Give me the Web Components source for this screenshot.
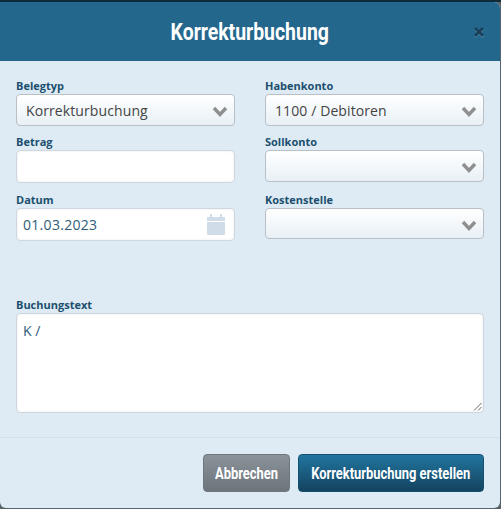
<!DOCTYPE html>
<html>
<head>
<meta charset="utf-8">
<style>
  html, body { margin: 0; height: 100%; overflow: hidden; }
  body { font-family: "Open Sans", sans-serif; background: linear-gradient(#0f2a38 0 2px, #59636a 2px); }
</style>
</head>
<body>
<template id="dialog-tpl">
  <style>
    :host { display: flex; flex-direction: column; box-sizing: border-box; width: 500px; height: 506px; margin-top: 2px; background: #deebf5; border-radius: 0 6px 6px 6px; overflow: hidden; }
    header { position: relative; height: 59px; flex: none; display: flex; align-items: center; justify-content: center; background: #24678c; color: #fff; font: 700 24px "Roboto", sans-serif; }
    header span { display: inline-block; transform: scaleX(.81); white-space: nowrap; }
    svg { position: absolute; right: 16px; top: 25px; }
    main { flex: 1; padding: 18px 16px 0; }
    footer { flex: none; height: 71px; box-sizing: border-box; border-top: 1px solid #d4e0ea; display: flex; justify-content: flex-end; align-items: flex-start; gap: 8px; padding: 16px 16px 0; }
  </style>
  <header><span><slot name="title"></slot></span>
    <svg width="10" height="11" viewBox="0 0 10 11">
      <path d="M1 2 9 10M9 2 1 10" stroke="#9cc4da" stroke-width="2.4" opacity=".5"/>
      <path d="M1 1 9 9M9 1 1 9" stroke="#173f56" stroke-width="2.6"/>
    </svg>
  </header>
  <main><slot></slot></main>
  <footer><slot name="actions"></slot></footer>
</template>

<template id="field-tpl">
  <style>
    :host { display: block; font: 400 14px "Open Sans", sans-serif; }
    label { display: block; font-weight: 700; font-size: 11px; line-height: 14px; color: #1c4f6d; }
    .box { box-sizing: border-box; margin-top: 1px; position: relative; display: flex; align-items: center; border-radius: 4px; }
    .select { height: var(--box-height, 32px); padding-left: 9px; letter-spacing: .1px; background: linear-gradient(#fff, #e8f0f6); border: 1px solid #b9bfc5; color: #444; }
    .input { height: 33px; margin-bottom: 1px; padding-left: 6px; letter-spacing: .3px; background: #fff; border: 1px solid #cfd6dd; color: #2f5c78; box-shadow: inset 0 0 3px rgba(0,0,0,.08); }
    svg { position: absolute; }
    .select svg { right: 5px; top: 50%; transform: translateY(calc(-50% + 1.5px)); }
    .input svg { right: 8px; top: 5px; }
  </style>
  <label></label>
  <div class="box"><slot></slot><span class="icon"></span></div>
</template>

<template id="text-tpl">
  <style>
    :host { display: block; font: 400 14px "Open Sans", sans-serif; }
    label { display: block; font-weight: 700; font-size: 11px; line-height: 14px; color: #1c4f6d; }
    .area { box-sizing: border-box; position: relative; margin-top: 1px; height: 100px; background: #fff; border: 1px solid #cfd6dd; border-radius: 4px; padding: 7px 6px; line-height: 19px; color: #2f5c78; box-shadow: inset 0 0 3px rgba(0,0,0,.08); }
    svg { position: absolute; right: 1px; bottom: 1px; }
  </style>
  <label></label>
  <div class="area"><slot></slot>
    <svg width="9" height="9" viewBox="0 0 9 9"><path d="M1 8.500 8.500 1M5 8.500 8.500 5" stroke="#666" stroke-width="1"/></svg>
  </div>
</template>

<template id="button-tpl">
  <style>
    :host { display: block; box-sizing: border-box; height: 38px; border-radius: 4px; color: #fff; font: 700 17px "Roboto", sans-serif; }
    :host([kind="grey"]) { background: linear-gradient(#8a929a, #6d747b); border: 1px solid #6f767c; width: 87px; }
    :host([kind="blue"]) { background: linear-gradient(#21759f, #14435f); border: 1px solid #14506f; width: 186px; }
    div { height: 100%; display: flex; align-items: center; justify-content: center; }
    span { display: inline-block; flex: none; white-space: nowrap; transform: scaleX(.76); }
  </style>
  <div><span><slot></slot></span></div>
</template>

<booking-dialog>
  <span slot="title">Korrekturbuchung</span>
  <booking-form>
    <form-field label="Belegtyp" type="select">Korrekturbuchung</form-field>
    <form-field label="Habenkonto" type="select">1100 / Debitoren</form-field>
    <form-field label="Betrag" type="input"></form-field>
    <form-field label="Sollkonto" type="select"></form-field>
    <form-field label="Datum" type="date">01.03.2023</form-field>
    <form-field label="Kostenstelle" type="select" style="--box-height: 31px"></form-field>
    <form-text label="Buchungstext">K /</form-text>
  </booking-form>
  <dialog-button slot="actions" kind="grey">Abbrechen</dialog-button>
  <dialog-button slot="actions" kind="blue">Korrekturbuchung erstellen</dialog-button>
</booking-dialog>

<script>
  const chevron = `<svg width="18" height="11" viewBox="0 0 18 11"><path d="M3 2 9 8.500 15 2" fill="none" stroke="#8f8f8f" stroke-width="3.4"/></svg>`;
  const calendar = `<svg width="20" height="22" viewBox="0 0 20 22"><path fill="#d0dde8" d="M4 0h2v3H4zM14 0h2v3h-2zM1 3h18v4H1zM1 8h18v12a1 1 0 0 1-1 1H2a1 1 0 0 1-1-1z"/></svg>`;

  function fromTemplate(el, id) {
    el.attachShadow({ mode: "open" });
    el.shadowRoot.appendChild(document.getElementById(id).content.cloneNode(true));
  }

  class BookingDialog extends HTMLElement {
    constructor() {
      super();
      fromTemplate(this, "dialog-tpl");
    }
  }

  class BookingForm extends HTMLElement {
    constructor() {
      super();
      this.attachShadow({ mode: "open" });
      this.shadowRoot.innerHTML = `
        <style>
          :host { display: grid; grid-template-columns: 219px 219px; column-gap: 30px; row-gap: 9px; }
          ::slotted(form-text) { grid-column: 1 / -1; margin-top: 47px; }
        </style>
        <slot></slot>`;
    }
  }

  class FormField extends HTMLElement {
    constructor() {
      super();
      fromTemplate(this, "field-tpl");
    }
    connectedCallback() {
      const type = this.getAttribute("type");
      this.shadowRoot.querySelector("label").textContent = this.getAttribute("label");
      const box = this.shadowRoot.querySelector(".box");
      box.classList.add(type === "select" ? "select" : "input");
      if (type === "select") box.querySelector(".icon").innerHTML = chevron;
      if (type === "date") box.querySelector(".icon").innerHTML = calendar;
    }
  }

  class FormText extends HTMLElement {
    constructor() {
      super();
      fromTemplate(this, "text-tpl");
    }
    connectedCallback() {
      this.shadowRoot.querySelector("label").textContent = this.getAttribute("label");
    }
  }

  class DialogButton extends HTMLElement {
    constructor() {
      super();
      fromTemplate(this, "button-tpl");
    }
  }

  customElements.define("booking-dialog", BookingDialog);
  customElements.define("booking-form", BookingForm);
  customElements.define("form-field", FormField);
  customElements.define("form-text", FormText);
  customElements.define("dialog-button", DialogButton);
</script>
</body>
</html>
